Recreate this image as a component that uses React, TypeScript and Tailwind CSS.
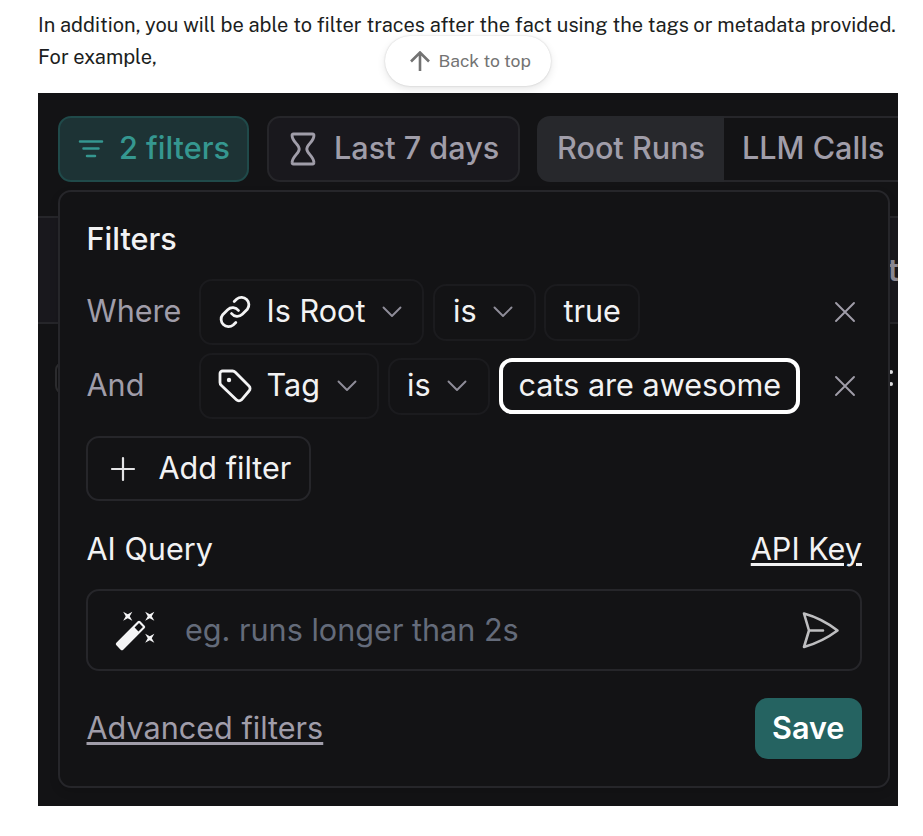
import type { ReactNode } from 'react';

const inter = "font-['Inter','Liberation_Sans',sans-serif]";
const body = "font-['Public_Sans','Roboto','Liberation_Sans',sans-serif]";

function Chevron({ className = '' }: { className?: string }) {
  return (
    <svg className={`shrink-0 ${className}`} width="20" height="12" viewBox="0 0 20 12" fill="none" stroke="#8f8d99" strokeWidth="1.9" strokeLinecap="round" strokeLinejoin="round">
      <path d="M1.5 1.5 10 10l8.500-8.500" />
    </svg>
  );
}

function Close() {
  return (
    <svg width="22" height="22" viewBox="0 0 22 22" fill="none" stroke="#a09da9" strokeWidth="1.9" strokeLinecap="round">
      <path d="M2 2l18 18M20 2 2 20" />
    </svg>
  );
}

function Box({ className, children }: { className: string; children: ReactNode }) {
  return <div className={`flex shrink-0 items-center rounded-[13px] border-2 border-[#1b1b1e] ${className}`}>{children}</div>;
}

function LinkIcon() {
  return (
    <svg className="shrink-0" width="34" height="34" viewBox="0 0 34 34" fill="none" stroke="#f4f4f5" strokeWidth="2.8" strokeLinecap="round">
      <path d="M13.500 18.500a7.200 7.200 0 0 0 10.800.8l5-5A7.400 7.400 0 0 0 18.800 4l-2.600 2.600" />
      <path d="M20.500 15.500a7.200 7.200 0 0 0-10.800-.8l-5 5A7.400 7.400 0 0 0 15.200 30l2.600-2.600" />
    </svg>
  );
}

function TagIcon() {
  return (
    <svg className="shrink-0" width="34" height="34" viewBox="0 0 34 34" fill="none" stroke="#f4f4f5" strokeWidth="2.8" strokeLinejoin="round">
      <path d="M2 4.600A2.600 2.600 0 0 1 4.600 2H14.500a4 4 0 0 1 2.800 1.200L31 16.900a3.600 3.600 0 0 1 0 5.100L23.500 30.800a3.600 3.600 0 0 1-5.100 0L3.200 16.300A4 4 0 0 1 2 13.500Z" />
      <circle cx="11" cy="11" r="2.200" fill="#f4f4f5" stroke="none" />
    </svg>
  );
}

export default function App() {
  return (
    <main className="relative h-[836px] w-[923px] overflow-hidden bg-white">
      <p className={`${body} h-[93px] pt-[9px] pl-[38px] text-[20px] leading-8 whitespace-nowrap text-[#1c1e21]`}>
        <span className="block">In addition, you will be able to filter traces after the fact using the tags or metadata provided.</span>
        <span className="block">For example,</span>
      </p>

      <section className={`${inter} relative ml-[38px] h-[713px] w-[860px] overflow-hidden bg-[#131315] text-[30.6px] leading-[40px] whitespace-nowrap text-[#f2f2f3]`}>
        <div className="flex h-[123px] pt-[23px] pl-5 font-medium text-[#a09da9]">
          <div className="flex h-[66px] w-[191px] shrink-0 items-center rounded-[13px] border-2 border-[#204a4a] bg-[#1d3335] pl-[18px] text-[#359790]">
            <svg width="26" height="18" viewBox="0 0 26 18" stroke="currentColor" strokeWidth="2.500" strokeLinecap="round">
              <path d="M2 1.500h22M5.500 8.500h15M9 16h8" />
            </svg>
            <span className="-mt-[2px] ml-[15px]">2 filters</span>
          </div>
          <div className="ml-[18px] flex h-[66px] w-[253px] shrink-0 items-center rounded-[13px] border-2 border-[#26262a] bg-[#19181d] pl-[21px]">
            <svg className="-mt-px" width="26" height="34" viewBox="0 0 26 34" fill="none" stroke="currentColor" strokeWidth="2.900" strokeLinejoin="round">
              <path d="M3.500 2h19q1.600 0 1.400 1.800C23.500 10 16.800 12.500 16.800 17s6.700 7 7.100 13.200q.2 1.800-1.400 1.800h-19q-1.600 0-1.400-1.800C2.500 24 9.200 21.500 9.200 17S2.500 10 2.100 3.800Q1.900 2 3.500 2Z" />
            </svg>
            <span className="-mt-[2px] ml-[18px]">Last 7 days</span>
          </div>
          <div className="ml-[17px] flex h-[66px] w-[187px] shrink-0 items-center rounded-l-[13px] bg-[#27282c] pl-5">
            <span className="-mt-[2px]">Root Runs</span>
          </div>
          <div className="flex h-[66px] w-[180px] shrink-0 items-center border-y-2 border-[#26262a] pl-[18px]">
            <span className="-mt-[2px]">LLM Calls</span>
          </div>
        </div>

        <div className="flex h-[108px] items-center justify-end border-y-2 border-[#26262a] bg-[#19181d] font-semibold text-[#8d8b96]">
          <span className="w-[10px]">t</span>
        </div>
        <div className="flex h-[108px] items-center justify-between">
          <div className="ml-[17px] h-8 w-8 rounded-lg border-2 border-[#2d2d30]" />
          <div className="mr-[5px] flex flex-col gap-2">
            <i className="block h-1 w-1 rounded-full bg-[#e8e8ea]" />
            <i className="block h-1 w-1 rounded-full bg-[#e8e8ea]" />
          </div>
        </div>

        <div className="absolute top-[97px] left-5 h-[598px] w-[832px] rounded-[13px] border-2 border-[#26262a] bg-[#131315] pr-[26px] pl-[26px] shadow-[0_4px_10px_#0000001f]">
          <h2 className="mt-[27px] h-10 pl-[0.5px] font-medium">Filters</h2>
          <div className="mt-[20px] flex h-[66px] items-center">
            <span className="-mt-[2px] w-[113px] pl-[0.5px] text-[#a09da9]">Where</span>
            <Box className="h-[66px] w-[225px] pl-[17px]">
              <LinkIcon />
              <span className="-mt-[2px] ml-[14.5px] w-[98.5px]">Is Root</span>
              <Chevron className="ml-[17px]" />
            </Box>
            <Box className="ml-[9px] h-[57px] w-[103px] pl-[18px]">
              <span className="-mt-[2px] w-[40px]">is</span>
              <Chevron />
            </Box>
            <Box className="ml-[8px] h-[57px] w-[96px] pl-[17.5px]">
              <span className="-mt-[2px]">true</span>
            </Box>
            <div className="mr-[6px] ml-auto"><Close /></div>
          </div>
          <div className="mt-[8px] flex h-[66px] items-center">
            <span className="-mt-[2px] w-[113px] pl-[0.5px] text-[#a09da9]">And</span>
            <Box className="h-[66px] w-[180px] pl-[17px]">
              <TagIcon />
              <span className="-mt-[2px] ml-[14.5px] w-[53.5px]">Tag</span>
              <Chevron className="ml-[17px]" />
            </Box>
            <Box className="ml-[9px] h-[57px] w-[102px] pl-[17px]">
              <span className="-mt-[2px] w-[40px]">is</span>
              <Chevron />
            </Box>
            <div className="ml-[9px] flex h-[56px] w-[301px] items-center rounded-[13px] border-4 border-white pl-[15.5px]">
              <span className="-mt-[2px]">cats are awesome</span>
            </div>
            <div className="mr-[6px] ml-auto"><Close /></div>
          </div>
          <button className="mt-[17px] flex h-[65px] w-[225px] items-center rounded-[13px] border-2 border-[#26262a] pl-[22px]">
            <svg width="26" height="26" viewBox="0 0 26 26" stroke="#e4e4e6" strokeWidth="2.200" strokeLinecap="round"><path d="M13 2v22M2 13h22" /></svg>
            <span className="-mt-[2px] ml-[22.5px]">Add filter</span>
          </button>
          <div className="mt-[28px] flex h-10 justify-between">
            <span className="pl-[0.5px]">AI Query</span>
            <a className="underline decoration-[3px] underline-offset-[3px]">API Key</a>
          </div>
          <div className="mt-[20px] flex h-[82px] items-center rounded-[13px] border-2 border-[#26262a] pl-[26px]">
            <svg width="44" height="44" viewBox="0 0 24 24" fill="#f4f4f5">
              <path d="M7.500 5.600 10 7 8.600 4.500 10 2 7.500 3.400 5 2l1.400 2.500L5 7zm12 9.800L17 14l1.400 2.500L17 19l2.500-1.400L22 19l-1.400-2.500L22 14zM22 2l-2.500 1.400L17 2l1.400 2.500L17 7l2.500-1.400L22 7l-1.400-2.500zM14.370 7.290a1 1 0 0 0-1.410 0L1.290 18.960a1 1 0 0 0 0 1.410l2.340 2.340a1 1 0 0 0 1.410 0L16.700 11.050a1 1 0 0 0 0-1.410zM13.340 12.780l-2.120-2.120 2.440-2.440 2.120 2.120z" />
            </svg>
            <span className="ml-[27px] text-[#646b7a]">eg. runs longer than 2s</span>
            <svg className="mr-[20px] ml-auto" width="38" height="38" viewBox="0 0 38 38" fill="none" stroke="#bebec0" strokeWidth="2.600" strokeLinejoin="round" strokeLinecap="round">
              <path d="M2 2.500Q20 7.500 35.500 19.500 20 31 2 36L7 19.500ZM7 19.500h14" />
            </svg>
          </div>
          <div className="mt-[27px] flex h-[61px] items-center justify-between">
            <a className="-mt-px pl-[0.5px] text-[#a09da9] underline decoration-[3px] underline-offset-[3px]">Advanced filters</a>
            <button className="flex h-[61px] w-[107px] items-center rounded-[13px] bg-[#256361] pl-[17px] font-semibold text-white">
              <span className="-mt-px">Save</span>
            </button>
          </div>
        </div>
      </section>

      <button className={`${body} absolute top-[36px] left-[385px] flex h-[50px] w-[166px] items-center rounded-full bg-white pl-[25px] text-[17.5px] text-[#737373] shadow-[0_0_2px_#0000002e,0_3px_8px_#0000001a]`}>
        <svg width="20" height="20" viewBox="0 0 20 20" fill="none" stroke="#737373" strokeWidth="2.600"><path d="M10 20V2M1 10.500l9-9 9 9" /></svg>
        <span className="ml-[8.5px]">Back to top</span>
      </button>
    </main>
  );
}
